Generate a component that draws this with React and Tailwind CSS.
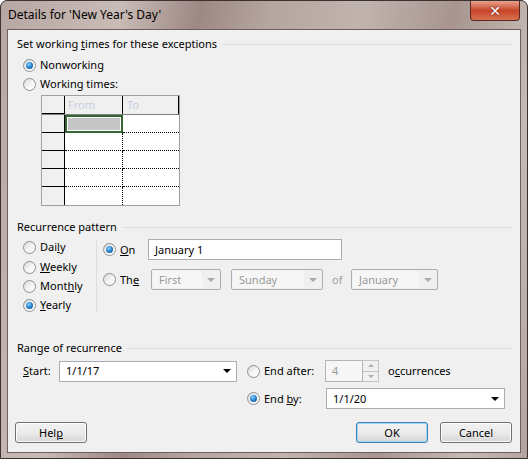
import React from 'react';

const font = "font-['Noto_Sans',sans-serif] text-[11px] leading-[16px] text-black";

function Radio({ checked }) {
    return (
        <span className="relative w-[13px] h-[13px] shrink-0 rounded-full border border-[#8e8f8f] bg-gradient-to-br from-[#d8d8d8] via-[#f4f4f4] to-white flex items-center justify-center">
            {checked && (
                <span className="w-[7px] h-[7px] rounded-full bg-[radial-gradient(circle_at_40%_35%,#8fd3ff_0%,#2a8ad4_45%,#0b3f7a_100%)]" />
            )}
        </span>
    );
}

function RadioRow({ checked, children, className = '' }) {
    return (
        <div className={`flex items-center h-[16px] gap-[4px] ${className}`}>
            <Radio checked={checked} />
            <span>{children}</span>
        </div>
    );
}

function GroupHeader({ children, className = '' }) {
    return (
        <div className={`flex items-center h-[16px] pl-[9px] pr-[7px] gap-[5px] ${className}`}>
            <span>{children}</span>
            <span className="flex-1 h-px bg-[#d5dfe5]" />
        </div>
    );
}

function DisabledSelect({ value, width }) {
    return (
        <div
            className="h-[21px] border border-[#adadad] rounded-[2px] bg-[#f0f0f0] flex items-stretch p-px"
            style={{ width }}
        >
            <span className="flex-1 bg-[#f6f6f6] pl-[6px] flex items-center text-[#9a9a9a]">{value}</span>
            <span className="w-[17px] flex items-center justify-center">
                <span className="w-0 h-0 border-l-[4px] border-r-[4px] border-t-[4px] border-l-transparent border-r-transparent border-t-[#a8a8a8]" />
            </span>
        </div>
    );
}

function DateBox({ value, className = '' }) {
    return (
        <div className={`h-[21px] border border-[#abadb3] bg-white flex items-center pl-[6px] pr-[5px] ${className}`}>
            <span className="flex-1">{value}</span>
            <span className="w-0 h-0 border-l-[4px] border-r-[4px] border-t-[4px] border-l-transparent border-r-transparent border-t-black" />
        </div>
    );
}

function Button({ children, isDefault }) {
    return (
        <div
            className={`w-[72px] h-[21px] rounded-[3px] border flex items-center justify-center bg-gradient-to-b from-[#f2f2f2] via-[#ebebeb] to-[#d6d6d6] ${
                isDefault ? 'border-[#3c7fb1] shadow-[inset_0_0_0_1px_#9fd5f6]' : 'border-[#707070] shadow-[inset_0_0_0_1px_#fcfcfc]'
            }`}
        >
            {children}
        </div>
    );
}

function ExceptionTable() {
    const rows = [0, 1, 2, 3, 4];
    return (
        <div className="ml-[33px] w-[139px] border border-[#a0a0a0] bg-white">
            <div className="flex h-[19px] border-b border-[#808080]">
                <div className="w-[23px] bg-[#f0f0f0] border-r border-black border-b border-b-black" />
                <div className="w-[58px] bg-[#f0f0f0] border-r border-black pl-[3px] flex items-center text-[#c5cfdd]">From</div>
                <div className="flex-1 bg-[#f0f0f0] border-r border-black pl-[4px] flex items-center text-[#c5cfdd]">To</div>
            </div>
            {rows.map((i) => (
                <div key={i} className="flex h-[18px]">
                    <div className={`w-[23px] bg-[#f0f0f0] border-r border-black ${i < 4 ? 'border-b border-b-black' : ''}`} />
                    {i === 0 ? (
                        <div className="w-[58px] border-2 border-[#336633] p-px bg-white">
                            <div className="w-full h-full bg-[#c6c6c6]" />
                        </div>
                    ) : (
                        <div className={`w-[58px] border-r border-dotted border-black ${i < 4 ? 'border-b border-b-black' : ''}`} />
                    )}
                    <div className={`flex-1 ${i < 4 ? 'border-b border-dotted border-black' : ''}`} />
                </div>
            ))}
        </div>
    );
}

export default function App() {
    return (
        <div className={`${font} w-[528px] h-[459px] relative overflow-hidden rounded-t-[7px] border border-[#3b3130] bg-[linear-gradient(100deg,#b7a7a2_0%,#c9bbb6_20%,#9d8884_33%,#b6a6a0_45%,#c1b3ae_60%,#a89590_75%,#c6bab5_90%,#b3a39e_100%)]`}>
            <div className="h-[28px] pl-[7px] flex items-center">
                <span className="text-[12px]">Details for 'New Year's Day'</span>
            </div>
            <div className="absolute top-0 right-[7px] w-[50px] h-[20px] rounded-b-[4px] border border-t-0 border-[#5a2a20] bg-gradient-to-b from-[#e8a08c] via-[#c8452a] to-[#d8704e] flex items-center justify-center">
                <span className="text-white font-bold text-[14px] leading-none font-['DejaVu_Sans',sans-serif] [text-shadow:0_0_2px_#4a1a10]">✕</span>
            </div>

            <div className="mx-[6px] h-[424px] border border-[#6e5f5b] bg-[#f0f0f0] flex flex-col">
                <GroupHeader className="mt-[6px]">
                    Set working <u>t</u>imes for these exceptions
                </GroupHeader>
                <RadioRow checked className="mt-[5px] pl-[15px]">Nonworking</RadioRow>
                <RadioRow className="mt-[3px] pl-[15px]">Working times:</RadioRow>
                <div className="mt-[3px]">
                    <ExceptionTable />
                </div>

                <GroupHeader className="mt-[13px]">Recurrence pattern</GroupHeader>
                <div className="mt-[4px] flex">
                    <div className="w-[88px] pl-[15px] flex flex-col">
                        <RadioRow>Dai<u>l</u>y</RadioRow>
                        <RadioRow className="mt-[4px]"><u>W</u>eekly</RadioRow>
                        <RadioRow className="mt-[3px]">Mont<u>h</u>ly</RadioRow>
                        <RadioRow checked className="mt-[3px]"><u>Y</u>early</RadioRow>
                    </div>
                    <div className="w-px h-[74px] bg-[#d5dfe5]" />
                    <div className="pl-[6px] flex flex-col">
                        <div className="flex items-center h-[21px]">
                            <RadioRow checked className="w-[45px]"><u>O</u>n</RadioRow>
                            <div className="w-[194px] h-[21px] border border-[#abadb3] bg-white pl-[6px] flex items-center">January 1</div>
                        </div>
                        <div className="flex items-center h-[21px] mt-[9px]">
                            <RadioRow className="w-[48px]">Th<u>e</u></RadioRow>
                            <DisabledSelect value="First" width={70} />
                            <div className="w-[10px]" />
                            <DisabledSelect value="Sunday" width={92} />
                            <span className="w-[28px] pl-[9px] text-[#a0a0a0]">of</span>
                            <DisabledSelect value="January" width={87} />
                        </div>
                    </div>
                </div>

                <GroupHeader className="mt-[27px]">Range of recurrence</GroupHeader>
                <div className="mt-[4px] flex items-start">
                    <div className="flex items-center h-[22px] pl-[15px]">
                        <span className="w-[36px]"><u>S</u>tart:</span>
                        <DateBox value="1/1/17" className="w-[178px] h-[20px]" />
                    </div>
                    <div className="ml-[10px] flex flex-col">
                        <div className="flex items-center h-[22px]">
                            <RadioRow className="w-[78px]">End after:</RadioRow>
                            <div className="w-[38px] h-[22px] border border-[#b5b5b5] bg-[#f6f6f6] pl-[6px] flex items-center text-[#9a9a9a]">4</div>
                            <div className="w-[16px] h-[22px] border border-[#c5c5c5] border-l-0 flex flex-col">
                                <div className="flex-1 border-b border-[#c5c5c5] flex items-center justify-center">
                                    <span className="w-0 h-0 border-l-[3px] border-r-[3px] border-b-[3px] border-l-transparent border-r-transparent border-b-[#b0b0b0]" />
                                </div>
                                <div className="flex-1 flex items-center justify-center">
                                    <span className="w-0 h-0 border-l-[3px] border-r-[3px] border-t-[3px] border-l-transparent border-r-transparent border-t-[#b0b0b0]" />
                                </div>
                            </div>
                            <span className="ml-[9px]">o<u>c</u>currences</span>
                        </div>
                        <div className="flex items-center h-[21px] mt-[6px]">
                            <RadioRow checked className="w-[79px]">End <u>b</u>y:</RadioRow>
                            <DateBox value="1/1/20" className="w-[179px]" />
                        </div>
                    </div>
                </div>

                <div className="mt-[13px] flex pl-[7px] pr-[8px]">
                    <Button>Hel<u>p</u></Button>
                    <div className="flex-1" />
                    <Button isDefault>OK</Button>
                    <div className="w-[12px]" />
                    <Button>Cancel</Button>
                </div>
            </div>
        </div>
    );
}
